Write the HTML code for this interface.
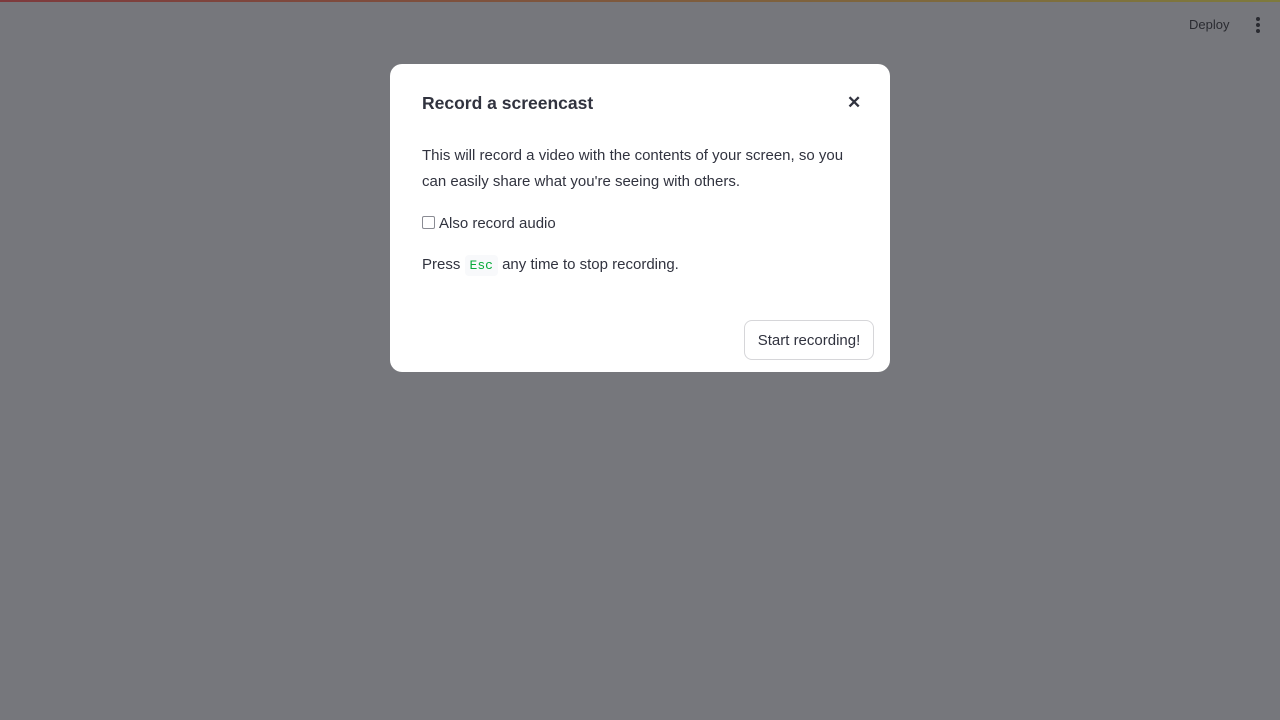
<!DOCTYPE html>
<html><head><style>
html,body{margin:0;padding:0;width:1280px;height:720px;overflow:hidden;background:#76777c;font-family:"Liberation Sans",sans-serif;color:#31333f}
.top{position:absolute;left:0;top:0;width:1280px;height:2px;background:linear-gradient(90deg,#7e3a3d,#7e7a3d)}
.deploy{position:absolute;left:1189px;top:17px;font-size:13px;color:#2a2b31}
.dots{position:absolute;left:1256px;top:17px}
.dots i{display:block;width:4px;height:4px;border-radius:2px;background:#2a2b31;margin-bottom:2px}
.modal{position:absolute;left:390px;top:64px;width:500px;height:308px;background:#fff;border-radius:12px}
h1{position:absolute;left:32px;top:29px;margin:0;font-size:17.5px;font-weight:bold;color:#31333f}
.x{position:absolute;left:457px;top:29px;font-size:17px;font-weight:bold;color:#31333f}
p{position:absolute;left:32px;margin:0;font-size:15px;line-height:26px;width:440px}
.cb{position:absolute;left:32px;top:152px;width:11px;height:11px;border:1.5px solid #8a8b93;border-radius:2px}
code{font-family:"Liberation Mono",monospace;color:#09ab3b;background:#f8f9fb;font-size:13px;padding:3px 5px;border-radius:4px}
.btn{position:absolute;left:354px;top:256px;width:130px;height:40px;border:1px solid #d6d6d9;border-radius:8px;box-sizing:border-box;font-size:15px;line-height:40px;text-align:center}
</style></head><body>
<div class="top"></div>
<div class="deploy">Deploy</div>
<div class="dots"><i></i><i></i><i></i></div>
<div class="modal">
<h1>Record a screencast</h1>
<div class="x">✕</div>
<p style="top:79px">This will record a video with the contents of your screen, so you can easily share what you're seeing with others.</p>
<div class="cb"></div>
<p style="top:147px;left:49px">Also record audio</p>
<p style="top:188px">Press <code>Esc</code> any time to stop recording.</p>
<div class="btn">Start recording!</div>
</div>
</body></html>
